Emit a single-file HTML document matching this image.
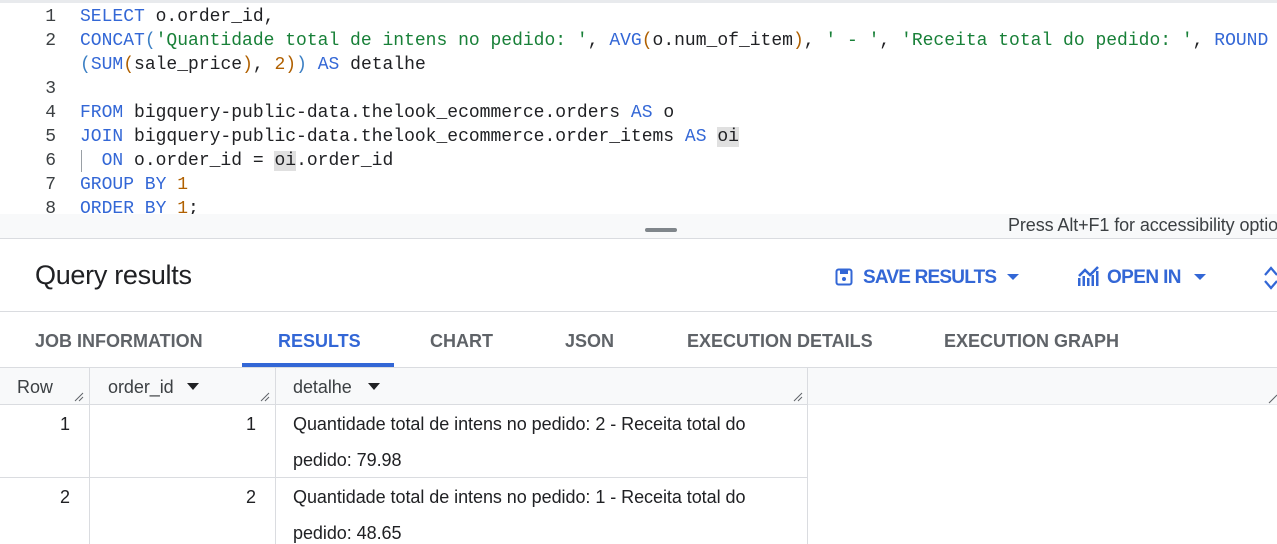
<!DOCTYPE html>
<html><head><meta charset="utf-8"><style>
*{margin:0;padding:0;box-sizing:border-box}
body{width:1277px;height:544px;overflow:hidden;background:#fff;font-family:"Liberation Sans",Arial,sans-serif;position:relative;color:#202124}
.abs{position:absolute;white-space:pre}
.code{font-family:"Liberation Mono",monospace;font-size:18px;line-height:24px;color:#202124}
.ln{position:absolute;left:0;width:56px;text-align:right;color:#3c4043;font-family:"Liberation Mono",monospace;font-size:18px;line-height:24px}
.k{color:#3367d6}.s{color:#188038}.n{color:#b06000}.p{color:#3b7fc4}
.tab{position:absolute;top:331px;font-size:18px;font-weight:bold;color:#5f6368;letter-spacing:0px;white-space:nowrap}
.cell{position:absolute;font-size:18px;letter-spacing:-0.05px;color:#202124;white-space:nowrap}
.hl{background:#e0e0e0}
</style></head><body>
<div class="abs" style="left:0;top:0;width:1277px;height:3px;background:#e8eaed"></div>
<div class="ln" style="top:5px">1</div>
<div class="ln" style="top:29px">2</div>
<div class="ln" style="top:77px">3</div>
<div class="ln" style="top:101px">4</div>
<div class="ln" style="top:125px">5</div>
<div class="ln" style="top:149px">6</div>
<div class="ln" style="top:173px">7</div>
<div class="ln" style="top:197px">8</div>
<div class="abs code" style="left:80px;top:5px"><span class="k">SELECT</span> o.order_id,</div>
<div class="abs code" style="left:80px;top:29px"><span class="k">CONCAT</span><span class="p">(</span><span class="s">'Quantidade total de intens no pedido: '</span>, <span class="k">AVG</span><span class="n">(</span>o.num_of_item<span class="n">)</span>, <span class="s">' - '</span>, <span class="s">'Receita total do pedido: '</span>, <span class="k">ROUND</span></div>
<div class="abs code" style="left:80px;top:53px"><span class="p">(</span><span class="k">SUM</span><span class="n">(</span>sale_price<span class="n">)</span>, <span class="n">2</span><span class="n">)</span><span class="p">)</span> <span class="k">AS</span> detalhe</div>
<div class="abs code" style="left:80px;top:101px"><span class="k">FROM</span> bigquery-public-data.thelook_ecommerce.orders <span class="k">AS</span> o</div>
<div class="abs code" style="left:80px;top:125px"><span class="k">JOIN</span> bigquery-public-data.thelook_ecommerce.order_items <span class="k">AS</span> <span class="hl">oi</span></div>
<div class="abs" style="left:81px;top:150px;width:1px;height:22px;background:#9aa0a6"></div>
<div class="abs code" style="left:80px;top:149px">  <span class="k">ON</span> o.order_id = <span class="hl">oi</span>.order_id</div>
<div class="abs code" style="left:80px;top:173px"><span class="k">GROUP BY</span> <span class="n">1</span></div>
<div class="abs code" style="left:80px;top:197px"><span class="k">ORDER BY</span> <span class="n">1</span>;</div>
<div class="abs" style="left:0;top:214px;width:1277px;height:24px;background:#f8f9fa"></div>
<div class="abs" style="left:0;top:238px;width:1277px;height:1px;background:#dadce0"></div>
<div class="abs" style="left:645px;top:228px;width:32px;height:4px;border-radius:2px;background:#80868b"></div>
<div class="abs" style="left:1008px;top:215px;font-size:18px;color:#3c4043;letter-spacing:-0.1px">Press Alt+F1 for accessibility options</div>
<div class="abs" style="left:35px;top:260px;font-size:27px;color:#202124;letter-spacing:-0.3px">Query results</div>
<svg class="abs" style="left:835px;top:268px" width="18" height="18" viewBox="0 0 18 18"><rect x="1.5" y="1.5" width="15" height="15" rx="2" fill="none" stroke="#3367d6" stroke-width="2"/><rect x="5" y="2" width="8" height="4" fill="#3367d6"/><circle cx="9" cy="11" r="2" fill="#3367d6"/></svg>
<div class="abs" style="left:863px;top:267px;font-size:19px;font-weight:bold;color:#3367d6;letter-spacing:-0.8px">SAVE RESULTS</div>
<div class="abs" style="left:1007px;top:274px;width:0;height:0;border-left:6px solid transparent;border-right:6px solid transparent;border-top:6px solid #3367d6"></div>
<svg class="abs" style="left:1077px;top:266px" width="23" height="20" viewBox="0 0 23 20"><path d="M2 10 L8 4 L13 9 L21 1" stroke="#3367d6" stroke-width="2.5" fill="none"/><rect x="1" y="12" width="2.5" height="8" fill="#3367d6"/><rect x="5.5" y="10" width="2.5" height="10" fill="#3367d6"/><rect x="10" y="12" width="2.5" height="8" fill="#3367d6"/><rect x="14.5" y="9" width="2.5" height="11" fill="#3367d6"/><rect x="19" y="5" width="2.5" height="15" fill="#3367d6"/></svg>
<div class="abs" style="left:1107px;top:267px;font-size:19px;font-weight:bold;color:#3367d6;letter-spacing:-0.6px">OPEN IN</div>
<div class="abs" style="left:1194px;top:274px;width:0;height:0;border-left:6px solid transparent;border-right:6px solid transparent;border-top:6px solid #3367d6"></div>
<svg class="abs" style="left:1263px;top:265px" width="14" height="26" viewBox="0 0 14 26"><path d="M2 10 L8 3 L14 10 M2 16 L8 23 L14 16" stroke="#3367d6" stroke-width="2.2" fill="none"/></svg>
<div class="abs" style="left:0;top:311px;width:1277px;height:1px;background:#dadce0"></div>
<div class="tab" style="left:35px">JOB INFORMATION</div>
<div class="tab" style="left:278px;color:#3367d6">RESULTS</div>
<div class="tab" style="left:430px">CHART</div>
<div class="tab" style="left:565px">JSON</div>
<div class="tab" style="left:687px">EXECUTION DETAILS</div>
<div class="tab" style="left:944px">EXECUTION GRAPH</div>
<div class="abs" style="left:242px;top:363px;width:152px;height:4px;background:#3367d6"></div>
<div class="abs" style="left:0;top:367px;width:1277px;height:1px;background:#dadce0"></div>
<div class="abs" style="left:0;top:368px;width:1277px;height:36px;background:#f8f9fa"></div>
<div class="abs" style="left:0;top:404px;width:808px;height:1px;background:#dadce0"></div>
<div class="abs" style="left:0;top:477px;width:808px;height:1px;background:#dadce0"></div>
<div class="abs" style="left:808px;top:404px;width:469px;height:1px;background:#e8eaed"></div>
<div class="abs" style="left:89px;top:368px;width:1px;height:176px;background:#dadce0"></div>
<div class="abs" style="left:275px;top:368px;width:1px;height:176px;background:#dadce0"></div>
<div class="abs" style="left:807px;top:368px;width:1px;height:176px;background:#dadce0"></div>
<div class="cell" style="left:17px;top:377px;color:#3c4043">Row</div>
<div class="cell" style="left:108px;top:377px;color:#3c4043">order_id</div>
<div class="abs" style="left:187px;top:383px;border-left:6px solid transparent;border-right:6px solid transparent;border-top:7px solid #202124"></div>
<div class="cell" style="left:293px;top:377px;color:#3c4043">detalhe</div>
<div class="abs" style="left:368px;top:383px;border-left:6px solid transparent;border-right:6px solid transparent;border-top:7px solid #202124"></div>
<svg class="abs" style="left:74px;top:392px" width="10" height="10"><path d="M1 9 L9 1 M5 9 L9 5" stroke="#5f6368" stroke-width="1"/></svg>
<svg class="abs" style="left:260px;top:392px" width="10" height="10"><path d="M1 9 L9 1 M5 9 L9 5" stroke="#5f6368" stroke-width="1"/></svg>
<svg class="abs" style="left:793px;top:392px" width="10" height="10"><path d="M1 9 L9 1 M5 9 L9 5" stroke="#5f6368" stroke-width="1"/></svg>
<svg class="abs" style="left:1268px;top:394px" width="10" height="10"><path d="M1 9 L9 1" stroke="#5f6368" stroke-width="1"/></svg>
<div class="cell" style="left:60px;top:414px">1</div>
<div class="cell" style="left:246px;top:414px">1</div>
<div class="cell" style="left:293px;top:414px">Quantidade total de intens no pedido: 2 - Receita total do</div>
<div class="cell" style="left:293px;top:450px">pedido: 79.98</div>
<div class="cell" style="left:60px;top:487px">2</div>
<div class="cell" style="left:246px;top:487px">2</div>
<div class="cell" style="left:293px;top:487px">Quantidade total de intens no pedido: 1 - Receita total do</div>
<div class="cell" style="left:293px;top:523px">pedido: 48.65</div>
</body></html>
